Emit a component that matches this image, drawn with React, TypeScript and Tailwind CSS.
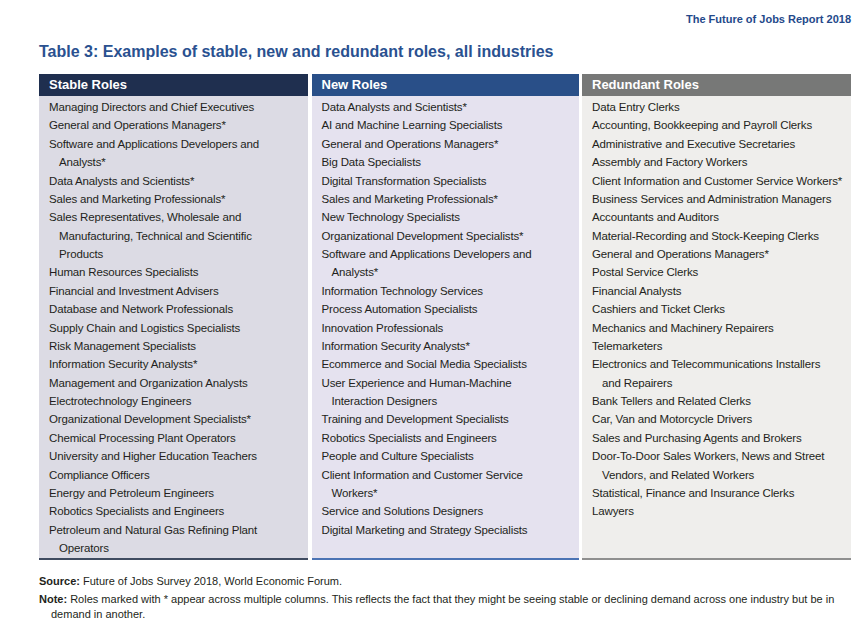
const stable = [
  ["Managing Directors and Chief Executives"],
  ["General and Operations Managers*"],
  ["Software and Applications Developers and", "Analysts*"],
  ["Data Analysts and Scientists*"],
  ["Sales and Marketing Professionals*"],
  ["Sales Representatives, Wholesale and", "Manufacturing, Technical and Scientific", "Products"],
  ["Human Resources Specialists"],
  ["Financial and Investment Advisers"],
  ["Database and Network Professionals"],
  ["Supply Chain and Logistics Specialists"],
  ["Risk Management Specialists"],
  ["Information Security Analysts*"],
  ["Management and Organization Analysts"],
  ["Electrotechnology Engineers"],
  ["Organizational Development Specialists*"],
  ["Chemical Processing Plant Operators"],
  ["University and Higher Education Teachers"],
  ["Compliance Officers"],
  ["Energy and Petroleum Engineers"],
  ["Robotics Specialists and Engineers"],
  ["Petroleum and Natural Gas Refining Plant", "Operators"],
];

const newRoles = [
  ["Data Analysts and Scientists*"],
  ["AI and Machine Learning Specialists"],
  ["General and Operations Managers*"],
  ["Big Data Specialists"],
  ["Digital Transformation Specialists"],
  ["Sales and Marketing Professionals*"],
  ["New Technology Specialists"],
  ["Organizational Development Specialists*"],
  ["Software and Applications Developers and", "Analysts*"],
  ["Information Technology Services"],
  ["Process Automation Specialists"],
  ["Innovation Professionals"],
  ["Information Security Analysts*"],
  ["Ecommerce and Social Media Specialists"],
  ["User Experience and Human-Machine", "Interaction Designers"],
  ["Training and Development Specialists"],
  ["Robotics Specialists and Engineers"],
  ["People and Culture Specialists"],
  ["Client Information and Customer Service", "Workers*"],
  ["Service and Solutions Designers"],
  ["Digital Marketing and Strategy Specialists"],
];

const redundant = [
  ["Data Entry Clerks"],
  ["Accounting, Bookkeeping and Payroll Clerks"],
  ["Administrative and Executive Secretaries"],
  ["Assembly and Factory Workers"],
  ["Client Information and Customer Service Workers*"],
  ["Business Services and Administration Managers"],
  ["Accountants and Auditors"],
  ["Material-Recording and Stock-Keeping Clerks"],
  ["General and Operations Managers*"],
  ["Postal Service Clerks"],
  ["Financial Analysts"],
  ["Cashiers and Ticket Clerks"],
  ["Mechanics and Machinery Repairers"],
  ["Telemarketers"],
  ["Electronics and Telecommunications Installers", "and Repairers"],
  ["Bank Tellers and Related Clerks"],
  ["Car, Van and Motorcycle Drivers"],
  ["Sales and Purchasing Agents and Brokers"],
  ["Door-To-Door Sales Workers, News and Street", "Vendors, and Related Workers"],
  ["Statistical, Finance and Insurance Clerks"],
  ["Lawyers"],
];

type ColProps = {
  title: string;
  items: string[][];
  head: string;
  body: string;
  line: string;
};

function Column({ title, items, head, body, line }: ColProps) {
  return (
    <div className="flex flex-col">
      <div className={`h-[22px] flex items-center pl-[10px] text-white font-bold text-[13px] ${head}`}>
        {title}
      </div>
      <div className={`flex-1 pt-[2px] pb-[1px] border-b-2 ${body} ${line}`}>
        {items.map((lines, i) => (
          <div key={i}>
            {lines.map((t, j) => (
              <div
                key={j}
                className={`h-[18.375px] leading-[18.375px] text-[11.5px] text-[#231f20] whitespace-nowrap tracking-[-0.15px] ${
                  j === 0 ? "pl-[10px]" : "pl-[20px]"
                }`}
              >
                {t}
              </div>
            ))}
          </div>
        ))}
      </div>
    </div>
  );
}

export default function App() {
  return (
    <div className="w-[868px] h-[622px] bg-white font-['Liberation_Sans',Arial,sans-serif] overflow-hidden">
      <div className="pl-[39px] w-[851px]">
        <div className="h-[33px] flex items-end justify-end pb-[6px] text-[11px] font-bold text-[#24498a]">
          The Future of Jobs Report 2018
        </div>
        <h1 className="h-[41px] flex items-center pb-[3px] text-[16px] font-bold text-[#2a5190]">
          Table 3: Examples of stable, new and redundant roles, all industries
        </h1>
        <div className="grid grid-cols-[269px_267px_269px] gap-x-[3.5px]">
          <Column
            title="Stable Roles"
            items={stable}
            head="bg-[#1f2f4f]"
            body="bg-[#dcdbe4]"
            line="border-[#3f4b60]"
          />
          <Column
            title="New Roles"
            items={newRoles}
            head="bg-[#294f88]"
            body="bg-[#e5e2ef]"
            line="border-[#4b73b4]"
          />
          <Column
            title="Redundant Roles"
            items={redundant}
            head="bg-[#777877]"
            body="bg-[#efeeec]"
            line="border-[#8f8f8f]"
          />
        </div>
        <div className="mt-[14px] w-[806px] text-[11px] text-[#231f20] leading-[15px]">
          <p>
            <span className="font-bold">Source:</span> Future of Jobs Survey 2018, World Economic Forum.
          </p>
          <p className="mt-[3px] pl-[12px] -indent-[12px]">
            <span className="font-bold">Note:</span> Roles marked with * appear across multiple columns. This
            reflects the fact that they might be seeing stable or declining demand across one industry but be
            in demand in another.
          </p>
        </div>
      </div>
    </div>
  );
}
